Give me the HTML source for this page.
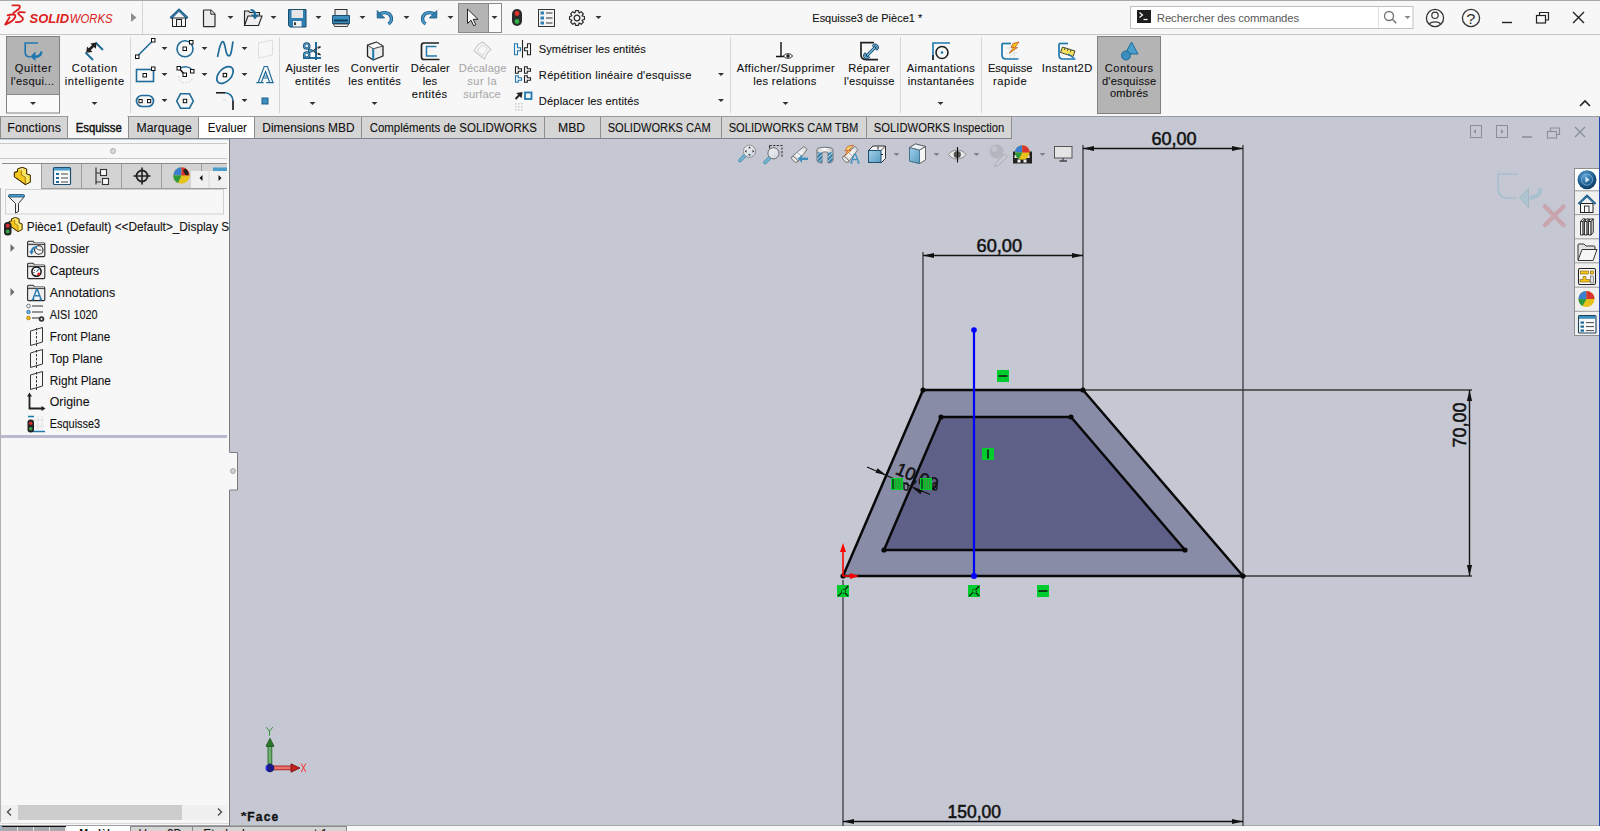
<!DOCTYPE html>
<html><head><meta charset="utf-8"><title>SOLIDWORKS</title>
<style>
*{margin:0;padding:0}
html,body{width:1600px;height:831px;overflow:hidden;background:#f7f7f7;font-family:"Liberation Sans",sans-serif}
svg{position:absolute;left:0;top:0;display:block}
</style></head><body>
<svg width="1600" height="831" viewBox="0 0 1600 831">
<rect x="0" y="0" width="1600" height="831" fill="#f7f7f7"/>
<line x1="0" y1="0.5" x2="1600" y2="0.5" stroke="#a9a9a9" stroke-width="1"/>
<line x1="0" y1="34.5" x2="1600" y2="34.5" stroke="#c6c6c6" stroke-width="1"/>
<line x1="142.5" y1="1" x2="142.5" y2="34" stroke="#d6d6d6" stroke-width="1"/>
<rect x="230" y="117" width="1370" height="709" fill="#c5c8d3"/>
<line x1="0" y1="116.5" x2="1600" y2="116.5" stroke="#9a9a9a" stroke-width="1"/>
<rect x="0" y="826" width="1600" height="5" fill="#f5f5f5"/>
<line x1="230" y1="825.5" x2="1600" y2="825.5" stroke="#a8a8a8" stroke-width="1"/>
<text x="812.32" y="22" font-family="Liberation Sans" font-size="11.3" font-weight="normal" fill="#111" textLength="109.86" lengthAdjust="spacingAndGlyphs" stroke="#111" stroke-width="0.1">Esquisse3 de Pièce1 *</text>
<rect x="0" y="117" width="68" height="21" fill="#d5d5d5"/>
<rect x="68" y="117" width="60" height="21" fill="#f7f7f7"/>
<rect x="128" y="117" width="70" height="21" fill="#d5d5d5"/>
<rect x="198" y="117" width="56" height="21" fill="#ffffff"/>
<rect x="254" y="117" width="107" height="21" fill="#d5d5d5"/>
<rect x="361" y="117" width="183" height="21" fill="#d5d5d5"/>
<rect x="544" y="117" width="56" height="21" fill="#d5d5d5"/>
<rect x="600" y="117" width="121" height="21" fill="#d5d5d5"/>
<rect x="721" y="117" width="145" height="21" fill="#d5d5d5"/>
<rect x="866" y="117" width="146" height="21" fill="#d5d5d5"/>
<line x1="0.5" y1="117" x2="0.5" y2="138" stroke="#8e8e8e" stroke-width="1"/>
<text x="7.35" y="132" font-family="Liberation Sans" font-size="12.5" font-weight="normal" fill="#111" textLength="53.50" lengthAdjust="spacingAndGlyphs" stroke="#111" stroke-width="0.1">Fonctions</text>
<line x1="67.5" y1="117" x2="67.5" y2="138" stroke="#8e8e8e" stroke-width="1"/>
<text x="75.65" y="132" font-family="Liberation Sans" font-size="12.5" font-weight="normal" fill="#111" textLength="46.10" lengthAdjust="spacingAndGlyphs" stroke="#111" stroke-width="0.45">Esquisse</text>
<line x1="128.5" y1="117" x2="128.5" y2="138" stroke="#8e8e8e" stroke-width="1"/>
<text x="136.55" y="132" font-family="Liberation Sans" font-size="12.5" font-weight="normal" fill="#111" textLength="55.20" lengthAdjust="spacingAndGlyphs" stroke="#111" stroke-width="0.1">Marquage</text>
<line x1="198.5" y1="117" x2="198.5" y2="138" stroke="#8e8e8e" stroke-width="1"/>
<text x="207.75" y="132" font-family="Liberation Sans" font-size="12.5" font-weight="normal" fill="#111" textLength="39.20" lengthAdjust="spacingAndGlyphs" stroke="#111" stroke-width="0.1">Evaluer</text>
<line x1="254.5" y1="117" x2="254.5" y2="138" stroke="#8e8e8e" stroke-width="1"/>
<text x="262.25" y="132" font-family="Liberation Sans" font-size="12.5" font-weight="normal" fill="#111" textLength="92.30" lengthAdjust="spacingAndGlyphs" stroke="#111" stroke-width="0.1">Dimensions MBD</text>
<line x1="361.5" y1="117" x2="361.5" y2="138" stroke="#8e8e8e" stroke-width="1"/>
<text x="369.65" y="132" font-family="Liberation Sans" font-size="12.5" font-weight="normal" fill="#111" textLength="167.30" lengthAdjust="spacingAndGlyphs" stroke="#111" stroke-width="0.1">Compléments de SOLIDWORKS</text>
<line x1="544.5" y1="117" x2="544.5" y2="138" stroke="#8e8e8e" stroke-width="1"/>
<text x="558.05" y="132" font-family="Liberation Sans" font-size="12.5" font-weight="normal" fill="#111" textLength="27.10" lengthAdjust="spacingAndGlyphs" stroke="#111" stroke-width="0.1">MBD</text>
<line x1="600.5" y1="117" x2="600.5" y2="138" stroke="#8e8e8e" stroke-width="1"/>
<text x="607.65" y="132" font-family="Liberation Sans" font-size="12.5" font-weight="normal" fill="#111" textLength="103.10" lengthAdjust="spacingAndGlyphs" stroke="#111" stroke-width="0.1">SOLIDWORKS CAM</text>
<line x1="721.5" y1="117" x2="721.5" y2="138" stroke="#8e8e8e" stroke-width="1"/>
<text x="728.65" y="132" font-family="Liberation Sans" font-size="12.5" font-weight="normal" fill="#111" textLength="129.70" lengthAdjust="spacingAndGlyphs" stroke="#111" stroke-width="0.1">SOLIDWORKS CAM TBM</text>
<line x1="866.5" y1="117" x2="866.5" y2="138" stroke="#8e8e8e" stroke-width="1"/>
<text x="873.85" y="132" font-family="Liberation Sans" font-size="12.5" font-weight="normal" fill="#111" textLength="130.50" lengthAdjust="spacingAndGlyphs" stroke="#111" stroke-width="0.1">SOLIDWORKS Inspection</text>
<line x1="1011.5" y1="117" x2="1011.5" y2="138" stroke="#8e8e8e" stroke-width="1"/>
<rect x="68.5" y="115.8" width="59" height="1.6" fill="#f7f7f7"/>
<line x1="0" y1="138.5" x2="1012" y2="138.5" stroke="#80858a" stroke-width="1"/>
<rect x="6.5" y="36.5" width="53" height="76.5" fill="#fbfbfb" stroke="#808080" stroke-width="1"/>
<rect x="7" y="37" width="52" height="57" fill="#b4b4b4"/>
<line x1="7" y1="94.5" x2="59" y2="94.5" stroke="#8a8a8a" stroke-width="1"/>
<text x="14.73" y="72" font-family="Liberation Sans" font-size="11.1" font-weight="normal" fill="#111" textLength="36.93" lengthAdjust="spacing" stroke="#111" stroke-width="0.1">Quitter</text>
<text x="10.83" y="84.6" font-family="Liberation Sans" font-size="11.1" font-weight="normal" fill="#111" textLength="43.33" lengthAdjust="spacing" stroke="#111" stroke-width="0.1">l'esqui...</text>
<path d="M30 102.0h6l-3 3z" fill="#333"/>
<text x="71.83" y="72" font-family="Liberation Sans" font-size="11.1" font-weight="normal" fill="#111" textLength="45.33" lengthAdjust="spacing" stroke="#111" stroke-width="0.1">Cotation</text>
<text x="64.83" y="84.6" font-family="Liberation Sans" font-size="11.1" font-weight="normal" fill="#111" textLength="59.33" lengthAdjust="spacing" stroke="#111" stroke-width="0.1">intelligente</text>
<path d="M91.5 102.0h6l-3 3z" fill="#333"/>
<line x1="130.5" y1="37" x2="130.5" y2="113" stroke="#d6d6d6" stroke-width="1"/>
<line x1="279.5" y1="37" x2="279.5" y2="113" stroke="#d6d6d6" stroke-width="1"/>
<line x1="730.5" y1="37" x2="730.5" y2="113" stroke="#d6d6d6" stroke-width="1"/>
<line x1="900.5" y1="37" x2="900.5" y2="113" stroke="#d6d6d6" stroke-width="1"/>
<line x1="981.5" y1="37" x2="981.5" y2="113" stroke="#d6d6d6" stroke-width="1"/>
<path d="M161.5 47.0h6l-3 3z" fill="#333"/>
<path d="M161.5 73.0h6l-3 3z" fill="#333"/>
<path d="M201.5 47.0h6l-3 3z" fill="#333"/>
<path d="M201.5 73.0h6l-3 3z" fill="#333"/>
<path d="M241.5 47.0h6l-3 3z" fill="#333"/>
<path d="M241.5 73.0h6l-3 3z" fill="#333"/>
<path d="M161.5 99.0h6l-3 3z" fill="#333"/>
<path d="M241.5 99.0h6l-3 3z" fill="#333"/>
<text x="285.53" y="72" font-family="Liberation Sans" font-size="11.1" font-weight="normal" fill="#111" textLength="53.83" lengthAdjust="spacing" stroke="#111" stroke-width="0.1">Ajuster les</text>
<text x="295.03" y="84.7" font-family="Liberation Sans" font-size="11.1" font-weight="normal" fill="#111" textLength="35.33" lengthAdjust="spacing" stroke="#111" stroke-width="0.1">entités</text>
<path d="M309.5 102.0h6l-3 3z" fill="#333"/>
<text x="350.83" y="72" font-family="Liberation Sans" font-size="11.1" font-weight="normal" fill="#111" textLength="47.83" lengthAdjust="spacing" stroke="#111" stroke-width="0.1">Convertir</text>
<text x="348.33" y="84.7" font-family="Liberation Sans" font-size="11.1" font-weight="normal" fill="#111" textLength="52.53" lengthAdjust="spacing" stroke="#111" stroke-width="0.1">les entités</text>
<path d="M371.5 102.0h6l-3 3z" fill="#333"/>
<text x="410.83" y="72" font-family="Liberation Sans" font-size="11.1" font-weight="normal" fill="#111" textLength="38.83" lengthAdjust="spacing" stroke="#111" stroke-width="0.1">Décaler</text>
<text x="422.83" y="84.7" font-family="Liberation Sans" font-size="11.1" font-weight="normal" fill="#111" textLength="14.33" lengthAdjust="spacing" stroke="#111" stroke-width="0.1">les</text>
<text x="411.83" y="97.5" font-family="Liberation Sans" font-size="11.1" font-weight="normal" fill="#111" textLength="35.33" lengthAdjust="spacing" stroke="#111" stroke-width="0.1">entités</text>
<text x="458.83" y="72" font-family="Liberation Sans" font-size="11.1" font-weight="normal" fill="#aaaaaa" textLength="47.53" lengthAdjust="spacing" stroke="#aaaaaa" stroke-width="0.1">Décalage</text>
<text x="467.33" y="84.7" font-family="Liberation Sans" font-size="11.1" font-weight="normal" fill="#aaaaaa" textLength="29.33" lengthAdjust="spacing" stroke="#aaaaaa" stroke-width="0.1">sur la</text>
<text x="463.33" y="97.5" font-family="Liberation Sans" font-size="11.1" font-weight="normal" fill="#aaaaaa" textLength="37.33" lengthAdjust="spacing" stroke="#aaaaaa" stroke-width="0.1">surface</text>
<text x="538.83" y="52.5" font-family="Liberation Sans" font-size="11.1" font-weight="normal" fill="#111" textLength="107.03" lengthAdjust="spacing" stroke="#111" stroke-width="0.1">Symétriser les entités</text>
<text x="538.83" y="78.7" font-family="Liberation Sans" font-size="11.1" font-weight="normal" fill="#111" textLength="152.53" lengthAdjust="spacing" stroke="#111" stroke-width="0.1">Répétition linéaire d'esquisse</text>
<text x="538.83" y="104.7" font-family="Liberation Sans" font-size="11.1" font-weight="normal" fill="#111" textLength="100.33" lengthAdjust="spacing" stroke="#111" stroke-width="0.1">Déplacer les entités</text>
<path d="M718 73.0h6l-3 3z" fill="#333"/>
<path d="M718 99.0h6l-3 3z" fill="#333"/>
<text x="736.73" y="71.7" font-family="Liberation Sans" font-size="11.1" font-weight="normal" fill="#111" textLength="97.93" lengthAdjust="spacing" stroke="#111" stroke-width="0.1">Afficher/Supprimer</text>
<text x="753.33" y="84.5" font-family="Liberation Sans" font-size="11.1" font-weight="normal" fill="#111" textLength="63.03" lengthAdjust="spacing" stroke="#111" stroke-width="0.1">les relations</text>
<path d="M782.5 102.0h6l-3 3z" fill="#333"/>
<text x="848.33" y="71.7" font-family="Liberation Sans" font-size="11.1" font-weight="normal" fill="#111" textLength="41.33" lengthAdjust="spacing" stroke="#111" stroke-width="0.1">Réparer</text>
<text x="844.03" y="84.5" font-family="Liberation Sans" font-size="11.1" font-weight="normal" fill="#111" textLength="50.33" lengthAdjust="spacing" stroke="#111" stroke-width="0.1">l'esquisse</text>
<text x="906.83" y="71.7" font-family="Liberation Sans" font-size="11.1" font-weight="normal" fill="#111" textLength="68.03" lengthAdjust="spacing" stroke="#111" stroke-width="0.1">Aimantations</text>
<text x="907.83" y="84.5" font-family="Liberation Sans" font-size="11.1" font-weight="normal" fill="#111" textLength="66.33" lengthAdjust="spacing" stroke="#111" stroke-width="0.1">instantanées</text>
<path d="M937.5 102.0h6l-3 3z" fill="#333"/>
<text x="987.93" y="72" font-family="Liberation Sans" font-size="11.1" font-weight="normal" fill="#111" textLength="44.53" lengthAdjust="spacing" stroke="#111" stroke-width="0.1">Esquisse</text>
<text x="992.93" y="84.9" font-family="Liberation Sans" font-size="11.1" font-weight="normal" fill="#111" textLength="33.63" lengthAdjust="spacing" stroke="#111" stroke-width="0.1">rapide</text>
<text x="1041.73" y="72" font-family="Liberation Sans" font-size="11.1" font-weight="normal" fill="#111" textLength="50.43" lengthAdjust="spacing" stroke="#111" stroke-width="0.1">Instant2D</text>
<rect x="1097.5" y="36.5" width="63" height="77" fill="#b4b4b4" stroke="#808080" stroke-width="1"/>
<text x="1104.83" y="72" font-family="Liberation Sans" font-size="11.1" font-weight="normal" fill="#111" textLength="48.33" lengthAdjust="spacing" stroke="#111" stroke-width="0.1">Contours</text>
<text x="1101.93" y="84.9" font-family="Liberation Sans" font-size="11.1" font-weight="normal" fill="#111" textLength="54.23" lengthAdjust="spacing" stroke="#111" stroke-width="0.1">d'esquisse</text>
<text x="1109.93" y="97.3" font-family="Liberation Sans" font-size="11.1" font-weight="normal" fill="#111" textLength="38.23" lengthAdjust="spacing" stroke="#111" stroke-width="0.1">ombrés</text>
<path d="M1580 106l5-5 5 5" fill="none" stroke="#222" stroke-width="1.6"/>
<rect x="0" y="139" width="229" height="687" fill="#f7f7f7"/>
<line x1="0" y1="139.5" x2="229" y2="139.5" stroke="#b9cdd3" stroke-width="1"/>
<line x1="229.5" y1="139" x2="229.5" y2="452" stroke="#7d7d7d" stroke-width="1"/>
<line x1="229.5" y1="490" x2="229.5" y2="826" stroke="#7d7d7d" stroke-width="1"/>
<path d="M229.5 452.5h8v37.5h-8" fill="#f7f7f7" stroke="#7d7d7d"/>
<circle cx="233" cy="471" r="2.5" fill="#d0d0d0" stroke="#9a9a9a" stroke-width="0.8"/>
<line x1="0" y1="143.5" x2="227" y2="143.5" stroke="#c9c9c9" stroke-width="1"/>
<line x1="0" y1="158.5" x2="227" y2="158.5" stroke="#c9c9c9" stroke-width="1"/>
<circle cx="113" cy="151" r="2.5" fill="#dcdcdc" stroke="#a0a0a0" stroke-width="0.8"/>
<rect x="41" y="163" width="186" height="25" fill="#d3d3d3"/>
<line x1="2" y1="163.5" x2="227" y2="163.5" stroke="#8c8c8c" stroke-width="1"/>
<line x1="41.5" y1="164" x2="41.5" y2="188" stroke="#9e9e9e" stroke-width="1"/>
<line x1="81.5" y1="164" x2="81.5" y2="188" stroke="#9e9e9e" stroke-width="1"/>
<line x1="121.5" y1="164" x2="121.5" y2="188" stroke="#9e9e9e" stroke-width="1"/>
<line x1="161.5" y1="164" x2="161.5" y2="188" stroke="#9e9e9e" stroke-width="1"/>
<line x1="201.5" y1="164" x2="201.5" y2="188" stroke="#9e9e9e" stroke-width="1"/>
<line x1="41" y1="188.5" x2="227" y2="188.5" stroke="#9e9e9e" stroke-width="1"/>
<rect x="2" y="164" width="39" height="25" fill="#f7f7f7"/>
<rect x="191" y="171" width="18" height="17" fill="#f0f0f0"/>
<rect x="209" y="171" width="18" height="17" fill="#f0f0f0"/>
<line x1="208.5" y1="171" x2="208.5" y2="188" stroke="#d0d0d0" stroke-width="1"/>
<path d="M203 174.5v6l-3-3z" fill="#111"/><path d="M218 174.5v6l3-3z" fill="#111"/>
<rect x="5.5" y="189.5" width="218" height="24.5" fill="#f7f7f7" stroke="#d0d0d0" stroke-width="1"/>
<text x="26.77" y="230.9" font-family="Liberation Sans" font-size="12.1" font-weight="normal" fill="#111" textLength="202.45" lengthAdjust="spacingAndGlyphs" stroke="#111" stroke-width="0.1">Pièce1 (Default) &lt;&lt;Default&gt;_Display S</text>
<text x="49.77" y="252.8" font-family="Liberation Sans" font-size="12.1" font-weight="normal" fill="#111" textLength="39.45" lengthAdjust="spacingAndGlyphs" stroke="#111" stroke-width="0.1">Dossier</text>
<text x="49.77" y="274.75" font-family="Liberation Sans" font-size="12.1" font-weight="normal" fill="#111" textLength="49.45" lengthAdjust="spacingAndGlyphs" stroke="#111" stroke-width="0.1">Capteurs</text>
<text x="49.77" y="296.7" font-family="Liberation Sans" font-size="12.1" font-weight="normal" fill="#111" textLength="65.45" lengthAdjust="spacingAndGlyphs" stroke="#111" stroke-width="0.1">Annotations</text>
<text x="49.77" y="318.65" font-family="Liberation Sans" font-size="12.1" font-weight="normal" fill="#111" textLength="47.85" lengthAdjust="spacingAndGlyphs" stroke="#111" stroke-width="0.1">AISI 1020</text>
<text x="49.77" y="340.6" font-family="Liberation Sans" font-size="12.1" font-weight="normal" fill="#111" textLength="60.45" lengthAdjust="spacingAndGlyphs" stroke="#111" stroke-width="0.1">Front Plane</text>
<text x="49.77" y="362.55" font-family="Liberation Sans" font-size="12.1" font-weight="normal" fill="#111" textLength="52.85" lengthAdjust="spacingAndGlyphs" stroke="#111" stroke-width="0.1">Top Plane</text>
<text x="49.77" y="384.5" font-family="Liberation Sans" font-size="12.1" font-weight="normal" fill="#111" textLength="61.15" lengthAdjust="spacingAndGlyphs" stroke="#111" stroke-width="0.1">Right Plane</text>
<text x="49.77" y="406.45000000000005" font-family="Liberation Sans" font-size="12.1" font-weight="normal" fill="#111" textLength="39.75" lengthAdjust="spacingAndGlyphs" stroke="#111" stroke-width="0.1">Origine</text>
<text x="49.77" y="428.4" font-family="Liberation Sans" font-size="12.1" font-weight="normal" fill="#111" textLength="50.45" lengthAdjust="spacingAndGlyphs" stroke="#111" stroke-width="0.1">Esquisse3</text>
<path d="M10.5 244l4 4-4 4z" fill="#6d6d6d"/>
<path d="M10.5 288l4 4-4 4z" fill="#6d6d6d"/>
<rect x="0" y="435" width="227" height="3" fill="#b9b9d0"/>
<rect x="0" y="805" width="227" height="15" fill="#f0f0f0"/>
<rect x="18" y="805" width="164" height="15" fill="#cdcdcd"/>
<path d="M11 808.5l-3.5 3.5 3.5 3.5M218 808.5l3.5 3.5-3.5 3.5" fill="none" stroke="#555" stroke-width="1.5"/>
<line x1="0" y1="825.5" x2="229" y2="825.5" stroke="#a0a0a0" stroke-width="1"/>
<rect x="0" y="826" width="1600" height="5" fill="#f8f8f8"/>
<line x1="0" y1="823.5" x2="229" y2="823.5" stroke="#dadada" stroke-width="1"/>
<rect x="0" y="826" width="2" height="5" fill="#9fb3c4"/>
<rect x="2" y="826" width="64" height="5" fill="#a7a9ae"/>
<line x1="2" y1="826.5" x2="66" y2="826.5" stroke="#111" stroke-width="1.2"/>
<line x1="17.5" y1="827" x2="17.5" y2="831" stroke="#e8e8e8" stroke-width="1"/>
<line x1="33.5" y1="827" x2="33.5" y2="831" stroke="#e8e8e8" stroke-width="1"/>
<line x1="49.5" y1="827" x2="49.5" y2="831" stroke="#e8e8e8" stroke-width="1"/>
<line x1="65.5" y1="827" x2="65.5" y2="831" stroke="#e8e8e8" stroke-width="1"/>
<rect x="67" y="826" width="63" height="5" fill="#ffffff"/>
<rect x="131" y="826" width="61" height="5" fill="#d5d5d5"/>
<rect x="193" y="826" width="153" height="5" fill="#d5d5d5"/>
<line x1="130.5" y1="826" x2="130.5" y2="831" stroke="#8a8a8a" stroke-width="1"/>
<line x1="192.5" y1="826" x2="192.5" y2="831" stroke="#8a8a8a" stroke-width="1"/>
<line x1="346.5" y1="826" x2="346.5" y2="831" stroke="#8a8a8a" stroke-width="1"/>
<line x1="130" y1="826.5" x2="347" y2="826.5" stroke="#8a8a8a" stroke-width="1"/>
<text x="79.28" y="837.5" font-family="Liberation Sans" font-size="12" font-weight="bold" fill="#111" textLength="36.44" lengthAdjust="spacingAndGlyphs">Modèle</text>
<text x="138.88" y="837.5" font-family="Liberation Sans" font-size="12" font-weight="normal" fill="#111" textLength="42.84" lengthAdjust="spacingAndGlyphs" stroke="#111" stroke-width="0.1">Vues 3D</text>
<text x="203.28" y="837.5" font-family="Liberation Sans" font-size="12" font-weight="normal" fill="#111" textLength="124.04" lengthAdjust="spacingAndGlyphs" stroke="#111" stroke-width="0.1">Etude de mouvement 1</text>
<line x1="0.5" y1="188" x2="0.5" y2="822" stroke="#b0b0b0" stroke-width="1"/>
<text x="240.40" y="819.5" font-family="Liberation Sans" font-size="10" font-weight="bold" fill="#111" textLength="6.40" lengthAdjust="spacingAndGlyphs">*</text>
<text x="247.28" y="821.2" font-family="Liberation Sans" font-size="12" font-weight="bold" fill="#111" textLength="30.94" lengthAdjust="spacing" stroke="#111" stroke-width="0.35">Face</text>
<polygon points="923,390 1083,390 1243,576 843,576" fill="#888ca7"/>
<polygon points="941,417 1071,417 1185,550 884,550" fill="#5f6087"/>
<line x1="1083" y1="145" x2="1083" y2="388" stroke="#3a3a3a" stroke-width="1.3"/>
<line x1="1243" y1="145" x2="1243" y2="826" stroke="#3a3a3a" stroke-width="1.3"/>
<line x1="923" y1="252" x2="923" y2="388" stroke="#3a3a3a" stroke-width="1.3"/>
<line x1="1085" y1="390" x2="1472" y2="390" stroke="#3a3a3a" stroke-width="1.3"/>
<line x1="1245" y1="576" x2="1472" y2="576" stroke="#3a3a3a" stroke-width="1.3"/>
<line x1="843" y1="580" x2="843" y2="826" stroke="#3a3a3a" stroke-width="1.3"/>
<line x1="1083" y1="148.5" x2="1243" y2="148.5" stroke="#111" stroke-width="1.4"/>
<path d="M1083 148.5l11 -2.6v5.2z M1243 148.5l-11 -2.6v5.2z" fill="#111"/>
<line x1="923" y1="255.5" x2="1083" y2="255.5" stroke="#111" stroke-width="1.4"/>
<path d="M923 255.5l11 -2.6v5.2z M1083 255.5l-11 -2.6v5.2z" fill="#111"/>
<line x1="1469.5" y1="390" x2="1469.5" y2="576" stroke="#111" stroke-width="1.4"/>
<path d="M1469.5 390l-2.6 11h5.2z M1469.5 576l-2.6 -11h5.2z" fill="#111"/>
<line x1="843" y1="821.5" x2="1243" y2="821.5" stroke="#111" stroke-width="1.4"/>
<path d="M843 821.5l11 -2.6v5.2z M1243 821.5l-11 -2.6v5.2z" fill="#111"/>
<text x="1151.39" y="145" font-family="Liberation Sans" font-size="18.5" font-weight="normal" fill="#111" textLength="45.22" lengthAdjust="spacingAndGlyphs" stroke="#111" stroke-width="0.55">60,00</text>
<text x="976.59" y="252.3" font-family="Liberation Sans" font-size="18.5" font-weight="normal" fill="#111" textLength="45.52" lengthAdjust="spacingAndGlyphs" stroke="#111" stroke-width="0.55">60,00</text>
<text x="947.62" y="818" font-family="Liberation Sans" font-size="18" font-weight="normal" fill="#111" textLength="53.46" lengthAdjust="spacingAndGlyphs" stroke="#111" stroke-width="0.55">150,00</text>
<g transform="translate(1466 447) rotate(-90)">
<text x="-0.62" y="0" font-family="Liberation Sans" font-size="18.6" font-weight="normal" fill="#111" textLength="45.03" lengthAdjust="spacingAndGlyphs" stroke="#111" stroke-width="0.55">70,00</text>
</g>
<polygon points="923,390 1083,390 1243,576 843,576" fill="none" stroke="#080808" stroke-width="2.5" stroke-linejoin="round"/>
<polygon points="941,417 1071,417 1185,550 884,550" fill="none" stroke="#080808" stroke-width="2.5" stroke-linejoin="round"/>
<circle cx="923" cy="390" r="2.6" fill="#080808"/>
<circle cx="1083" cy="390" r="2.6" fill="#080808"/>
<circle cx="1243" cy="576" r="2.6" fill="#080808"/>
<circle cx="843" cy="576" r="2.6" fill="#080808"/>
<circle cx="941" cy="417" r="2.6" fill="#080808"/>
<circle cx="1071" cy="417" r="2.6" fill="#080808"/>
<circle cx="1185" cy="550" r="2.6" fill="#080808"/>
<circle cx="884" cy="550" r="2.6" fill="#080808"/>
<line x1="974" y1="330" x2="974" y2="576" stroke="#0000ff" stroke-width="2.2"/>
<circle cx="974" cy="330" r="2.8" fill="#0000ff"/><circle cx="974" cy="576" r="3" fill="#0000ff"/>
<path d="M843 576V551" stroke="#ff0000" stroke-width="1.6"/><path d="M843 543l-3 9h6z" fill="#ff0000"/>
<path d="M843 576H851" stroke="#ff0000" stroke-width="1.6"/><path d="M859 576l-9 -3v6z" fill="#ff0000"/>
<path d="M867 467L930 494.5" stroke="#111" stroke-width="1.2"/>
<path d="M886 475l-10.5 -2.2 2 -4.6z M912 487.5l10.5 2.2 -2 4.6z" fill="#111"/>
<g transform="translate(895.5 474) rotate(23.27)">
<text x="-1.08" y="0" font-family="Liberation Sans" font-size="18" font-weight="normal" fill="#111" textLength="44.16" lengthAdjust="spacingAndGlyphs" stroke="#111" stroke-width="0.55">10,00</text>
</g>
<rect x="997" y="370" width="12" height="12" fill="#00cc2e"/>
<line x1="998.5" y1="376" x2="1007.5" y2="376" stroke="#111" stroke-width="1.5"/>
<rect x="982" y="448" width="12" height="12" fill="#00cc2e"/>
<line x1="988" y1="449.5" x2="988" y2="458.5" stroke="#111" stroke-width="1.5"/>
<rect x="837" y="585" width="12" height="12" fill="#00cc2e"/>
<path d="M838.2 596.2L841.8 592.6M844.8 589.6L848.2 586M845 593L848.2 596.2" stroke="#111" stroke-width="1.2" fill="none"/>
<circle cx="843.4" cy="591.3" r="2" fill="#00cc2e" stroke="#111" stroke-width="1" stroke-dasharray="1.2 0.9"/>
<rect x="968" y="585" width="12" height="12" fill="#00cc2e"/>
<path d="M969.2 596.2L972.8 592.6M975.8 589.6L979.2 586M976 593L979.2 596.2" stroke="#111" stroke-width="1.2" fill="none"/>
<circle cx="974.4" cy="591.3" r="2" fill="#00cc2e" stroke="#111" stroke-width="1" stroke-dasharray="1.2 0.9"/>
<rect x="1037" y="585" width="12" height="12" fill="#00cc2e"/>
<line x1="1038.5" y1="591" x2="1047.5" y2="591" stroke="#111" stroke-width="1.5"/>
<rect x="891" y="478" width="12" height="12" fill="#00cc2e"/>
<line x1="893" y1="479" x2="893" y2="489" stroke="#111" stroke-width="1.2"/>
<line x1="895.5" y1="479" x2="895.5" y2="489" stroke="#3c8c3c" stroke-width="1.2"/>
<line x1="898" y1="479" x2="898" y2="489" stroke="#3c8c3c" stroke-width="1.2"/>
<line x1="900.5" y1="479" x2="900.5" y2="489" stroke="#3c8c3c" stroke-width="1.2"/>
<rect x="920" y="478" width="12" height="12" fill="#00cc2e"/>
<line x1="922" y1="479" x2="922" y2="489" stroke="#111" stroke-width="1.2"/>
<line x1="924.5" y1="479" x2="924.5" y2="489" stroke="#3c8c3c" stroke-width="1.2"/>
<line x1="927" y1="479" x2="927" y2="489" stroke="#3c8c3c" stroke-width="1.2"/>
<line x1="929.5" y1="479" x2="929.5" y2="489" stroke="#3c8c3c" stroke-width="1.2"/>
<rect x="904" y="483" width="4" height="7" rx="1.5" fill="none" stroke="#111" stroke-width="1.3"/>
<rect x="933" y="483" width="4" height="7" rx="1.5" fill="none" stroke="#111" stroke-width="1.3"/>
<rect x="1130.5" y="6.5" width="282.5" height="22" fill="#ffffff" stroke="#c0c0c0" stroke-width="1"/>
<line x1="1378.5" y1="7" x2="1378.5" y2="28" stroke="#e2e2e2" stroke-width="1"/>
<rect x="1137" y="10" width="14" height="13" fill="#1e1e1e"/>
<path d="M1139.5 12.5l3 2.5-3 2.5" stroke="#fff" stroke-width="1.2" fill="none"/><path d="M1143.5 19.5h4" stroke="#fff" stroke-width="1.2"/>
<text x="1156.82" y="22.3" font-family="Liberation Sans" font-size="11.4" font-weight="normal" fill="#5a5a5a" textLength="142.37" lengthAdjust="spacing" stroke-width="0">Rechercher des commandes</text>
<circle cx="1389" cy="16" r="4.5" fill="none" stroke="#777" stroke-width="1.4"/><path d="M1392.3 19.3l4 4" stroke="#777" stroke-width="1.6"/>
<path d="M1404.5 16.0h6l-3 3z" fill="#888"/>
<g fill="none" stroke="#dc2020" stroke-linecap="round" stroke-linejoin="round"><path d="M12.4 5.4h6.2c1.7 0 1.6 2.2 0.2 3.6l-5.4 3.9" stroke-width="1.9"/><path d="M7.6 15.3c4.2-1.3 8.6-1.3 7.6 1.6c-1.4 3.6-6 6.2-10 7.6l4.4-7.2" stroke-width="1.9"/><path d="M24.8 12.4c-2.8-0.5-7.4-0.6-6.4 1.5c0.9 1.9 4.8 2.8 4.6 5.1c-0.2 2.4-4.4 3.2-7.2 3.1" stroke-width="1.9"/></g>
<text x="29.55" y="22.9" font-family="Liberation Sans" font-size="12.5" font-weight="bold" fill="#dc2020" textLength="39.50" lengthAdjust="spacingAndGlyphs" font-style="italic">SOLID</text>
<text x="69.85" y="22.9" font-family="Liberation Sans" font-size="12.5" font-weight="normal" fill="#dc2020" textLength="42.70" lengthAdjust="spacingAndGlyphs" font-style="italic" stroke-width="0">WORKS</text>
<path d="M131 13v9l5.5-4.5z" fill="#8e8e8e"/>
<g><rect x="172.5" y="18" width="13" height="8.5" fill="#f7f7f7" stroke="#222" stroke-width="1"/><rect x="176.5" y="19.5" width="5" height="7" fill="#eee" stroke="#222" stroke-width="1"/><path d="M170.5 18.2L179 10l8.5 8.2" fill="none" stroke="#1d5a84" stroke-width="2.6"/><path d="M171.5 17.6L179 10.6l7.5 7" fill="none" stroke="#4f9ac8" stroke-width="0.8"/></g>
<path d="M203.5 10h7.5l4 4v12c0 0.5-0.3 0.6-0.6 0.6h-10.3c-0.4 0-0.6-0.2-0.6-0.6v-15.4c0-0.4 0.2-0.6 0.6-0.6z" fill="#ececec" stroke="#2a2a2a" stroke-width="1.2"/><path d="M210.8 10v4.2h4.2" fill="#ddd" stroke="#2a2a2a" stroke-width="1"/>
<path d="M227.5 16.0h6l-3 3z" fill="#333"/>
<path d="M244.5 25.5v-14.5h4l1.5 1.5h9.5v3" fill="#e2e2e2" stroke="#222" stroke-width="1.1"/><path d="M244.5 25.5l3.5-9.5h14l-3.5 9.5z" fill="#f0f0f0" stroke="#222" stroke-width="1.1"/><path d="M250.5 10c3 0 4.5 2 4.5 5" fill="none" stroke="#1f6b99" stroke-width="2.2"/><path d="M251 14.5h8l-4 5z" fill="#1f6b99"/>
<path d="M270.5 16.0h6l-3 3z" fill="#333"/>
<path d="M288.5 9.5h17.5v17.5h-16l-1.5-1.5z" fill="#2f7fb0" stroke="#1b4d6e" stroke-width="1"/><rect x="291.5" y="10" width="11.5" height="8" fill="#e6e6e6"/><rect x="293" y="21" width="8.5" height="5.5" fill="#f2f2f2"/><rect x="294.2" y="22.3" width="1.6" height="2.8" fill="#111"/>
<path d="M315.5 16.0h6l-3 3z" fill="#333"/>
<rect x="335" y="9.5" width="12" height="6" fill="#ececec" stroke="#333" stroke-width="1"/><path d="M332.5 15.5h17v8h-17z" fill="#3b8dbd" stroke="#1b4d6e" stroke-width="1"/><rect x="334" y="19.5" width="14" height="2" fill="#0f3f5f"/><path d="M333.5 24h15l-1 2.5h-13z" fill="#eee" stroke="#333" stroke-width="0.9"/>
<path d="M359.5 16.0h6l-3 3z" fill="#333"/>
<path d="M378 15.5c4-4 11-4 13 1c1.2 3-0.5 6-2.5 7.5" fill="none" stroke="#1d5a84" stroke-width="3.4"/><path d="M378 15.5c4-4 11-4 13 1c1.2 3-0.5 6-2.5 7.5" fill="none" stroke="#4c9ccd" stroke-width="1.6"/><path d="M377.2 10.5v7.5h7.5z" fill="#2f7fb0" stroke="#1d5a84" stroke-width="0.8"/>
<path d="M403.5 16.0h6l-3 3z" fill="#333"/>
<path d="M436 15.5c-4-4-11-4-13 1c-1.2 3 0.5 6 2.5 7.5" fill="none" stroke="#1d5a84" stroke-width="3.4"/><path d="M436 15.5c-4-4-11-4-13 1c-1.2 3 0.5 6 2.5 7.5" fill="none" stroke="#4c9ccd" stroke-width="1.6"/><path d="M436.8 10.5v7.5h-7.5z" fill="#2f7fb0" stroke="#1d5a84" stroke-width="0.8"/>
<path d="M447.5 16.0h6l-3 3z" fill="#333"/>
<rect x="458.5" y="3.5" width="43" height="29" fill="#fafafa" stroke="#8a8a8a"/><rect x="459" y="4" width="29.5" height="28" fill="#b4b4b4"/><line x1="488.5" y1="4" x2="488.5" y2="32" stroke="#8a8a8a"/><path d="M467.5 9v14.5l3.5-3.3 2.6 5.5 2.2-1-2.6-5.4h4.8z" fill="#fafafa" stroke="#222" stroke-width="1"/>
<path d="M491.5 16.0h6l-3 3z" fill="#333"/>
<rect x="512" y="9" width="10" height="17" rx="5" fill="#2b2b2b"/><circle cx="517" cy="13.5" r="2.4" fill="#e23030"/><circle cx="517" cy="21.5" r="2.4" fill="#2fb04a"/>
<rect x="538.5" y="9.5" width="16" height="17" fill="#f4f4f4" stroke="#333" stroke-width="1"/><rect x="540.5" y="11.5" width="3.5" height="3" fill="#2f7fb0"/><rect x="540.5" y="16.5" width="3.5" height="3" fill="#2f7fb0"/><rect x="540.5" y="21.5" width="3.5" height="3" fill="#2f7fb0"/><path d="M546 13h6.5M546 18h6.5M546 23h6.5" stroke="#333" stroke-width="1"/>
<g transform="translate(577 18)"><path d="M-1.97 -5.24 L-1.51 -7.45 L1.51 -7.45 L1.97 -5.24 L2.31 -5.10 L4.20 -6.33 L6.33 -4.20 L5.10 -2.31 L5.24 -1.97 L7.45 -1.51 L7.45 1.51 L5.24 1.97 L5.10 2.31 L6.33 4.20 L4.20 6.33 L2.31 5.10 L1.97 5.24 L1.51 7.45 L-1.51 7.45 L-1.97 5.24 L-2.31 5.10 L-4.20 6.33 L-6.33 4.20 L-5.10 2.31 L-5.24 1.97 L-7.45 1.51 L-7.45 -1.51 L-5.24 -1.97 L-5.10 -2.31 L-6.33 -4.20 L-4.20 -6.33 L-2.31 -5.10z" fill="#f4f4f4" stroke="#2a2a2a" stroke-width="1.2" stroke-linejoin="round"/><circle r="2.9" fill="none" stroke="#2a2a2a" stroke-width="1.3"/></g>
<path d="M595.5 16.0h6l-3 3z" fill="#333"/>
<circle cx="1435" cy="18" r="8.6" fill="none" stroke="#333" stroke-width="1.3"/><circle cx="1435" cy="15.3" r="3.2" fill="none" stroke="#333" stroke-width="1.2"/><path d="M1429.5 24.2c1.2-3.2 9.8-3.2 11 0" fill="none" stroke="#333" stroke-width="1.2"/>
<circle cx="1471" cy="18" r="8.6" fill="none" stroke="#333" stroke-width="1.3"/>
<text x="1466.36" y="23.5" font-family="Liberation Sans" font-size="14" font-weight="normal" fill="#333" textLength="9.18" lengthAdjust="spacingAndGlyphs">?</text>
<path d="M1502 22.5h10" stroke="#222" stroke-width="1.4"/>
<rect x="1536.5" y="15.5" width="9" height="7.5" fill="none" stroke="#222" stroke-width="1.2"/><path d="M1539.5 15.5v-3h9v7.5h-3" fill="none" stroke="#222" stroke-width="1.2"/>
<path d="M1573 12l11 11M1584 12l-11 11" stroke="#222" stroke-width="1.4"/>
<path d="M38 43H25.2v9.5c0 2.8 2 4.5 5.5 4.5" fill="none" stroke="#1f78ad" stroke-width="1.7"/><path d="M41.5 51.5c-0.5 3.5-3.5 5.5-7.5 5.3" fill="none" stroke="#1f78ad" stroke-width="2.4"/><path d="M30.5 56.5l5-5.2v10z" fill="#1f78ad"/>
<path d="M95.5 42.5l7.5 7.5M85.5 52.5l7.5 7.5" stroke="#1f6b99" stroke-width="1.9"/><path d="M88.5 50.5L94 45" stroke="#222" stroke-width="2.6"/><path d="M86.2 52.8l0.8-6.2 5.4 5.4z M96.6 42.6l-6.2 0.8 5.4 5.4z" fill="#222"/>
<path d="M137 56.5L153.5 40" stroke="#1f6b99" stroke-width="1.6"/><rect x="135.5" y="55" width="3.5" height="3.5" fill="#fff" stroke="#111" stroke-width="1"/><rect x="151.5" y="38.5" width="3.5" height="3.5" fill="#fff" stroke="#111" stroke-width="1"/>
<circle cx="185" cy="48.8" r="8" fill="none" stroke="#1f6b99" stroke-width="1.6"/><rect x="183" y="47" width="3.5" height="3.5" fill="#fff" stroke="#111" stroke-width="1"/><rect x="189.5" y="40.5" width="3.5" height="3.5" fill="#fff" stroke="#111" stroke-width="1"/>
<path d="M217.5 57c1.2-5 2-12 4.5-15c2.5-2.5 3.2 7 4.5 11c1 3.5 3.5 4 4.5 0c0.8-3 1.2-7 2-11.5" fill="none" stroke="#1f6b99" stroke-width="1.7"/>
<path d="M258.5 43l14-3v15l-14 3z" fill="none" stroke="#d0d0d0" stroke-width="1" stroke-dasharray="1.5 1"/>
<rect x="136.5" y="69.5" width="17" height="12" fill="none" stroke="#1f6b99" stroke-width="1.6"/><rect x="143" y="73.5" width="3.5" height="3.5" fill="#fff" stroke="#111" stroke-width="1"/><rect x="151.5" y="67" width="3.5" height="3.5" fill="#fff" stroke="#111" stroke-width="1"/>
<path d="M179 69.5c4-4 11-3.5 13.5 1.5" fill="none" stroke="#1f6b99" stroke-width="1.5"/><path d="M178.5 76c0.5 5 4 7 7 7s6.5-2 7.5-6" fill="none" stroke="#cfcfcf" stroke-width="1.2" stroke-dasharray="1.5 2"/><path d="M179 68l5 6" stroke="#111" stroke-width="1.4"/><rect x="177" y="66.5" width="3.5" height="3.5" fill="#fff" stroke="#111" stroke-width="1"/><rect x="183" y="73" width="3.5" height="3.5" fill="#fff" stroke="#111" stroke-width="1"/><rect x="190.5" y="69.5" width="3.5" height="3.5" fill="#fff" stroke="#111" stroke-width="1"/>
<ellipse cx="225" cy="75" rx="10" ry="6.2" transform="rotate(-47 225 75)" fill="none" stroke="#1f6b99" stroke-width="1.7"/><rect x="223.2" y="73.4" width="3.4" height="3.4" fill="#fff" stroke="#111" stroke-width="1.1"/>
<path d="M256.3 82.6h7.3M266.2 82.6h7.6M258.3 82.3L264.2 66.5h3.3L272.8 82.3M261.4 82.3L265.6 71.5L269.6 82.3M262.5 78h6.2M263.3 76h4.6" fill="none" stroke="#1f6b99" stroke-width="1.15"/>
<rect x="136.5" y="95.5" width="17" height="11" rx="5.5" fill="none" stroke="#1f6b99" stroke-width="1.7"/><rect x="139" y="99.5" width="3.2" height="3.2" fill="#fff" stroke="#111" stroke-width="1"/><rect x="147.5" y="99.5" width="3.2" height="3.2" fill="#fff" stroke="#111" stroke-width="1"/>
<path d="M180.5 93.8h9l3.8 7.2-3.8 7.2h-9l-3.8-7.2z" fill="none" stroke="#1f6b99" stroke-width="1.6"/><rect x="183.3" y="99.3" width="3.4" height="3.4" fill="#fff" stroke="#111" stroke-width="1"/>
<path d="M216 92.8h9" stroke="#111" stroke-width="1.5"/><path d="M225 92.8c4.5 0 8 3.5 8 8" fill="none" stroke="#1f6b99" stroke-width="1.6"/><path d="M233 100.5v9.5" stroke="#111" stroke-width="1.6"/><path d="M223 98.5l3 3M226 98.5l-3 3" stroke="#ddd" stroke-width="0.8"/>
<rect x="262" y="98" width="6" height="6" fill="#3d8fc0" stroke="#1f5f8a" stroke-width="1"/>
<path d="M316 42v18M303 58h18" stroke="#1f6b99" stroke-width="2"/><path d="M308.5 48.5L314 50.8L308.5 53z" fill="#4a9ccb" stroke="#154d72" stroke-width="0.9"/><circle cx="306.7" cy="46" r="2.6" fill="none" stroke="#154d72" stroke-width="2.4"/><circle cx="306.7" cy="46" r="2.6" fill="none" stroke="#5aaee0" stroke-width="0.9"/><circle cx="306.7" cy="55" r="2.6" fill="none" stroke="#154d72" stroke-width="2.4"/><circle cx="306.7" cy="55" r="2.6" fill="none" stroke="#5aaee0" stroke-width="0.9"/><path d="M314 50l7-3.5M314 51.5l7 3.5" stroke="#333" stroke-width="1.4" stroke-dasharray="1.2 0.8"/><path d="M321 46.3l-3.5 0.5 1.5 2z M321 55.2l-3.5-0.5 1.5-2z" fill="#222"/>
<path d="M367.5 45.2L376.5 42.2L383 46V56L373.2 60L367.5 56.3z" fill="#ededed" stroke="#222" stroke-width="1.3" stroke-linejoin="round"/><path d="M367.5 45.2L376.5 42.2L383 46L373.2 48.8z" fill="#fbfbfb" stroke="#333" stroke-width="0.9" stroke-linejoin="round"/><path d="M373.2 49v11" stroke="#1f78ad" stroke-width="2"/>
<path d="M439 43h-15c-1.5 0-2.5 1-2.5 2.5v11.5c0 1.5 1 2.5 2.5 2.5h15.5" fill="none" stroke="#222" stroke-width="1.7"/><path d="M436.5 46.5h-10v9.5h10.5" fill="none" stroke="#1f78ad" stroke-width="1.5"/>
<path d="M474 51c2-4 5-8 9-9l8 7.5c-3 2-5 5-6.5 9.5z" fill="none" stroke="#cacaca" stroke-width="1.1"/><path d="M477 51c1.5-2.5 3.5-5 6-6l4.5 4.5c-2 1.5-3.5 3.5-4.5 6z" fill="none" stroke="#d5d5d5" stroke-width="1"/>
<polygon points="514.50,43.80 517.50,43.80 517.50,47.80 520.50,47.80 520.50,50.80 517.50,50.80 517.50,54.80 514.50,54.80" fill="none" stroke="#1f78ad" stroke-width="1.1"/>
<polygon points="530.50,43.80 527.50,43.80 527.50,47.80 524.50,47.80 524.50,50.80 527.50,50.80 527.50,54.80 530.50,54.80" fill="none" stroke="#222" stroke-width="1.1"/>
<path d="M522.5 40v17.8" stroke="#222" stroke-width="1.1"/>
<polygon points="515.50,66.80 518.30,66.80 518.30,68.80 521.50,68.80 521.50,71.30 518.30,71.30 518.30,73.30 515.50,73.30" fill="none" stroke="#222" stroke-width="1.1"/>
<polygon points="524.50,66.80 527.30,66.80 527.30,68.80 530.50,68.80 530.50,71.30 527.30,71.30 527.30,73.30 524.50,73.30" fill="none" stroke="#222" stroke-width="1.1"/>
<polygon points="515.50,75.80 518.30,75.80 518.30,77.80 521.50,77.80 521.50,80.30 518.30,80.30 518.30,82.30 515.50,82.30" fill="none" stroke="#1f78ad" stroke-width="1.1"/>
<polygon points="524.50,75.80 527.30,75.80 527.30,77.80 530.50,77.80 530.50,80.30 527.30,80.30 527.30,82.30 524.50,82.30" fill="none" stroke="#222" stroke-width="1.1"/>
<path d="M515.5 99l5.5-5.5" stroke="#222" stroke-width="1.9"/><path d="M522.5 92l-6.2 0.9 5.3 5.3z" fill="#222"/><rect x="525" y="92.5" width="6.5" height="6.5" fill="none" stroke="#1f78ad" stroke-width="1.8"/>
<rect x="515" y="103" width="1.6" height="1.6" fill="#cfcfcf"/>
<rect x="515" y="106" width="1.6" height="1.6" fill="#cfcfcf"/>
<rect x="515" y="109" width="1.6" height="1.6" fill="#cfcfcf"/>
<rect x="518" y="103" width="1.6" height="1.6" fill="#cfcfcf"/>
<rect x="518" y="106" width="1.6" height="1.6" fill="#cfcfcf"/>
<rect x="518" y="109" width="1.6" height="1.6" fill="#cfcfcf"/>
<rect x="521" y="103" width="1.6" height="1.6" fill="#cfcfcf"/>
<rect x="521" y="106" width="1.6" height="1.6" fill="#cfcfcf"/>
<rect x="521" y="109" width="1.6" height="1.6" fill="#cfcfcf"/>
<path d="M781 42v14M776 56.5h8" stroke="#111" stroke-width="1.4"/><path d="M783.5 56c1.5-3 7.5-3 9 0c-1.5 3-7.5 3-9 0z" fill="#fff" stroke="#222" stroke-width="1"/><circle cx="788" cy="56" r="1.8" fill="#222"/>
<path d="M874 42.6h-13v12.5c0 2.6 2 4.5 5 4.5h12" fill="none" stroke="#222" stroke-width="1.7"/><g transform="rotate(-45 871 51.5)"><rect x="865" y="50.3" width="12" height="2.4" fill="#6ab4dc" stroke="#0d3a5a" stroke-width="0.9"/><path d="M866 48.2a3.4 3.4 0 1 0 0 6.6v-2h-2v-2.6h2z" fill="#6ab4dc" stroke="#0d3a5a" stroke-width="0.9"/><path d="M876 48.2a3.4 3.4 0 1 1 0 6.6v-2h2v-2.6h-2z" fill="#6ab4dc" stroke="#0d3a5a" stroke-width="0.9"/></g>
<path d="M933 60V43h17" fill="none" stroke="#1f78ad" stroke-width="1.6"/><path d="M933 55v5" stroke="#222" stroke-width="1.6"/><circle cx="942" cy="52.5" r="6" fill="none" stroke="#222" stroke-width="1.6"/><circle cx="942" cy="52.5" r="1.3" fill="#1f78ad"/>
<path d="M1002 43.5v11.5c0 2.5 1.5 4 4 4h12.5" fill="none" stroke="#1f78ad" stroke-width="1.7"/><path d="M1002 43.5h9" stroke="#1f78ad" stroke-width="1.7"/><path d="M1006 48h12M1006 53h12M1010 44v14M1014.5 44v14" stroke="#e0e0e0" stroke-width="0.8"/><path d="M1019 42l-6 1.5-2 4 3-0.5-4.5 6 8-5.5-3 0.5z" fill="#f5c518" stroke="#c4561a" stroke-width="0.8"/>
<path d="M1059 43.5v11.5c0 2.5 1.5 4 4 4h12.5" fill="none" stroke="#1f78ad" stroke-width="1.7"/><path d="M1059 43.5h9" stroke="#1f78ad" stroke-width="1.7"/><path d="M1062.5 47l12.5 4-2 5.5-12.5-4z" fill="#f2e25a" stroke="#333" stroke-width="0.9"/><path d="M1065 48l-0.6 2M1068 49l-0.6 2M1071 50l-0.6 2" stroke="#333" stroke-width="0.8"/><path d="M1068 54l6 4" stroke="#1f78ad" stroke-width="1.5"/>
<path d="M1131.5 42l-6.5 12h13z" fill="#4a9ccb" stroke="#1f6b99" stroke-width="1"/><circle cx="1126" cy="55.5" r="4.5" fill="#3b8dbd" stroke="#1f6b99" stroke-width="1"/>
<g transform="translate(14.4 167.4) scale(1.0)" stroke-linejoin="round"><path d="M0 5L3.1 4.2V1.6L7.8 0L12.2 1.6V6.6L15.9 7.8V14.7L10.9 17.2L0 9.4z" fill="#f4c81c" stroke="#4a3200" stroke-width="1"/><path d="M3.1 1.6L7.8 0L12.2 1.6L6.9 3.1z" fill="#f8e98a"/><path d="M6.9 3.1L12.2 1.6V6.6L6.9 7.5z" fill="#fde45a"/><path d="M6.9 7.5L12.2 6.6L15.9 7.8L10.9 9.7z" fill="#f8e98a"/><path d="M10.9 9.7L15.9 7.8V14.7L10.9 17.2z" fill="#fde45a"/><path d="M6.9 3.1V7.5L10.9 9.7V17.2" fill="none" stroke="#8a5a00" stroke-width="0.8"/><path d="M0 5L3.1 4.2V1.6L7.8 0L12.2 1.6V6.6L15.9 7.8V14.7L10.9 17.2L0 9.4z" fill="none" stroke="#4a3200" stroke-width="1"/></g>
<rect x="53.5" y="167.5" width="17" height="17" rx="1" fill="#fafafa" stroke="#1d4f73" stroke-width="1.2"/><rect x="54" y="168" width="16" height="2.5" fill="#4a9ccb"/><rect x="56" y="173" width="3" height="2" fill="#1f6b99"/><rect x="56" y="177" width="3" height="2" fill="#1f6b99"/><rect x="56" y="181" width="3" height="2" fill="#1f6b99"/><path d="M61 174h7M61 178h7M61 182h7" stroke="#333" stroke-width="0.9"/>
<path d="M96 167.5v17M96 173h5M96 182h5" fill="none" stroke="#333" stroke-width="1.2"/><rect x="100.5" y="169.5" width="6" height="6" fill="#fafafa" stroke="#333" stroke-width="1.1"/><rect x="102.5" y="178.5" width="6" height="6" fill="#fafafa" stroke="#333" stroke-width="1.1"/>
<circle cx="142" cy="176" r="5.5" fill="none" stroke="#222" stroke-width="1.8"/><path d="M133.5 176h17M142 167.5v17" stroke="#222" stroke-width="1.6"/>
<g><circle cx="181.5" cy="175.5" r="8.2" fill="#e8c21c"/><path d="M181.5 175.5L181.5 167.3A8.2 8.2 0 0 0 173.3 175.5z" fill="#3b7fd0"/><path d="M181.5 175.5L173.3 175.5A8.2 8.2 0 0 0 178 183z" fill="#2e9a3a"/><path d="M181.5 175.5L181.5 167.3A8.2 8.2 0 0 1 189.7 175.5z" fill="#d8332f"/><ellipse cx="186" cy="172" rx="2" ry="3.5" transform="rotate(-30 186 172)" fill="#222"/></g>
<rect x="213" y="167.5" width="14" height="4" fill="#4a9ccb"/>
<rect x="191" y="171" width="18" height="17" fill="#f0f0f0"/><rect x="209.5" y="171" width="17.5" height="17" fill="#f0f0f0"/><line x1="209" y1="171" x2="209" y2="188" stroke="#d8d8d8"/><path d="M202.5 175v6l-3-3z" fill="#111"/><path d="M218.5 175v6l3-3z" fill="#111"/>
<path d="M8.5 196.5h16l-6 7v8l-3 1.5v-9.5z" fill="#f0f0f0" stroke="#333" stroke-width="1"/><rect x="8.5" y="194.5" width="16" height="2.5" rx="1.2" fill="#4a9ccb" stroke="#1d4f73" stroke-width="0.8"/>
<g transform="translate(9 217.5) scale(0.82)" stroke-linejoin="round"><path d="M0 5L3.1 4.2V1.6L7.8 0L12.2 1.6V6.6L15.9 7.8V14.7L10.9 17.2L0 9.4z" fill="#f4c81c" stroke="#4a3200" stroke-width="1"/><path d="M3.1 1.6L7.8 0L12.2 1.6L6.9 3.1z" fill="#f8e98a"/><path d="M6.9 3.1L12.2 1.6V6.6L6.9 7.5z" fill="#fde45a"/><path d="M6.9 7.5L12.2 6.6L15.9 7.8L10.9 9.7z" fill="#f8e98a"/><path d="M10.9 9.7L15.9 7.8V14.7L10.9 17.2z" fill="#fde45a"/><path d="M6.9 3.1V7.5L10.9 9.7V17.2" fill="none" stroke="#8a5a00" stroke-width="0.8"/><path d="M0 5L3.1 4.2V1.6L7.8 0L12.2 1.6V6.6L15.9 7.8V14.7L10.9 17.2L0 9.4z" fill="none" stroke="#4a3200" stroke-width="1"/></g>
<rect x="4" y="222" width="7.5" height="13.5" rx="3.5" fill="#222"/><circle cx="7.7" cy="225.8" r="2" fill="#d83030"/><circle cx="7.7" cy="231.6" r="2" fill="#3aa048"/>
<path d="M27.6 255.6v-13.4c0-0.6 0.4-1 1-1h4.4l1.6 1.8h9.2c0.6 0 1 0.4 1 1v11.6c0 0.6-0.4 1-1 1h-15.2c-0.6 0-1-0.4-1-1z" fill="#f0f0f0" stroke="#2a2a2a" stroke-width="1.1"/><path d="M28.2 243.6h15.9" stroke="#bdbdbd" stroke-width="1.6"/><path d="M27.6 244.6h17.1" stroke="#2a2a2a" stroke-width="0.9"/>
<circle cx="38.8" cy="250" r="4.2" fill="#fafafa" stroke="#222" stroke-width="1.1"/><path d="M38.8 250l-2.6-1.6M38.8 250h2.6" fill="none" stroke="#222" stroke-width="0.8"/><path d="M31.5 252.5c0-3.5 2.3-5.5 5.5-5.6" fill="none" stroke="#2a7fb5" stroke-width="2"/><path d="M29.2 251.3h4.6l-2.3 3.4z" fill="#2a7fb5"/>
<path d="M27.6 277.6v-13.4c0-0.6 0.4-1 1-1h4.4l1.6 1.8h9.2c0.6 0 1 0.4 1 1v11.6c0 0.6-0.4 1-1 1h-15.2c-0.6 0-1-0.4-1-1z" fill="#f0f0f0" stroke="#2a2a2a" stroke-width="1.1"/><path d="M28.2 265.6h15.9" stroke="#bdbdbd" stroke-width="1.6"/><path d="M27.6 266.6h17.1" stroke="#2a2a2a" stroke-width="0.9"/>
<circle cx="36.5" cy="271.6" r="4.6" fill="#fafafa" stroke="#111" stroke-width="1.5"/><path d="M36.5 271.6l3-3" stroke="#2a7fb5" stroke-width="1.3"/><circle cx="38.8" cy="274" r="1.6" fill="#e82020"/><path d="M33.5 269.5l1.5 1.5M33 272.5h1.8" stroke="#555" stroke-width="0.8"/>
<path d="M27.6 299.6v-13.4c0-0.6 0.4-1 1-1h4.4l1.6 1.8h9.2c0.6 0 1 0.4 1 1v11.6c0 0.6-0.4 1-1 1h-15.2c-0.6 0-1-0.4-1-1z" fill="#f0f0f0" stroke="#2a2a2a" stroke-width="1.1"/><path d="M28.2 287.6h15.9" stroke="#bdbdbd" stroke-width="1.6"/><path d="M27.6 288.6h17.1" stroke="#2a2a2a" stroke-width="0.9"/>
<path d="M32.8 299.5l3.7-10h0.9l3.7 10M34.3 295.8h5.2M31.8 299.5h2.6M39.5 299.5h2.6" fill="none" stroke="#2a7fb5" stroke-width="1.5"/>
<circle cx="28.5" cy="306" r="1.8" fill="#fff" stroke="#555" stroke-width="0.8"/><circle cx="28.5" cy="312" r="1.8" fill="#6ab0e0" stroke="#3a70a0" stroke-width="0.8"/><circle cx="28.5" cy="318" r="1.8" fill="#f5c518" stroke="#a07000" stroke-width="0.8"/><path d="M32 306h11M32 312h11M32 318h7" stroke="#333" stroke-width="1.2"/><circle cx="41.5" cy="319" r="2.8" fill="#333"/><circle cx="41.5" cy="319" r="1" fill="#f7f7f7"/>
<path d="M30.5 331l12-3.5v14.5l-12 3.5z" fill="none" stroke="#333" stroke-width="1"/><path d="M36.5 328v18" stroke="#333" stroke-width="1" stroke-dasharray="2.5 1.5"/>
<path d="M30.5 353l12-3.5v14.5l-12 3.5z" fill="none" stroke="#333" stroke-width="1"/><path d="M36.5 350v18" stroke="#333" stroke-width="1" stroke-dasharray="2.5 1.5"/>
<path d="M30.5 375l12-3.5v14.5l-12 3.5z" fill="none" stroke="#333" stroke-width="1"/><path d="M36.5 372v18" stroke="#333" stroke-width="1" stroke-dasharray="2.5 1.5"/>
<path d="M29.5 395v13.5h14" fill="none" stroke="#222" stroke-width="1.8"/><path d="M29.5 392.5l-2.5 4h5z M45.5 408.5l-4-2.5v5z" fill="#222"/>
<path d="M28 416.5h6" stroke="#1f78ad" stroke-width="1.5"/><path d="M33 431.5h12" stroke="#1f78ad" stroke-width="1.5"/><path d="M34 420h10M34 426h10M38 416v15M42 416v15" stroke="#dddddd" stroke-width="0.8"/><rect x="27.5" y="419.5" width="6.5" height="13" rx="3" fill="#222"/><circle cx="30.7" cy="423.2" r="1.8" fill="#d83030"/><circle cx="30.7" cy="428.8" r="1.8" fill="#3aa048"/>
<defs><linearGradient id="gl" x1="0" y1="0" x2="1" y2="1"><stop offset="0" stop-color="#f4f6f8"/><stop offset="1" stop-color="#c9d2da"/></linearGradient><linearGradient id="gb" x1="0" y1="0" x2="1" y2="1"><stop offset="0" stop-color="#9fd0ea"/><stop offset="1" stop-color="#5a9cc0"/></linearGradient><linearGradient id="gs" x1="0" y1="0" x2="1" y2="0"><stop offset="0" stop-color="#cfcfcf"/><stop offset="0.5" stop-color="#fafafa"/><stop offset="1" stop-color="#bdbdbd"/></linearGradient><pattern id="hatch" width="3" height="3" patternUnits="userSpaceOnUse" patternTransform="rotate(45)"><rect width="3" height="3" fill="#2f6f95"/><rect width="1.2" height="3" fill="#9fd3ee"/></pattern></defs>
<path d="M740 160.5l5.5-5.5" stroke="#4f91ad" stroke-width="3.6" stroke-linecap="round"/><path d="M740 160.5l5.5-5.5" stroke="#74b8d6" stroke-width="1.8" stroke-linecap="round"/><circle cx="749.5" cy="151.3" r="6" fill="url(#gl)" stroke="#6b6b6b" stroke-width="1" stroke-dasharray="1.2 0.6"/><path d="M749.5 146.5l-1.5 1.8h3z M749.5 156.1l-1.5-1.8h3z M744.7 151.3l1.8-1.5v3z M754.3 151.3l-1.8-1.5v3z" fill="#333"/>
<path d="M769.5 145.5h12.5v11.5" fill="none" stroke="#333" stroke-width="1.1" stroke-dasharray="2.2 1.4"/><path d="M769.5 145.5v3" stroke="#333" stroke-width="1.1"/><path d="M765 162.5l4.5-4.5" stroke="#4f91ad" stroke-width="3.6" stroke-linecap="round"/><path d="M765 162.5l4.5-4.5" stroke="#74b8d6" stroke-width="1.8" stroke-linecap="round"/><circle cx="773.5" cy="153.3" r="5.6" fill="url(#gl)" stroke="#666" stroke-width="1"/>
<defs><linearGradient id="gs2" x1="0" y1="1" x2="1" y2="0"><stop offset="0" stop-color="#bdbdbd"/><stop offset="0.5" stop-color="#fbfbfb"/><stop offset="1" stop-color="#cfcfcf"/></linearGradient></defs>
<polygon points="797.25,162.13 807.09,149.52 803.91,146.48 791.75,156.87" fill="url(#gs2)" stroke="#6e6e6e" stroke-width="0.9" stroke-linejoin="round"/>
<line x1="801.68" y1="156.45" x2="797.22" y2="152.20" stroke="#8a8a8a" stroke-width="0.8"/>
<ellipse cx="794.5" cy="159.5" rx="1.8" ry="3.8" transform="rotate(-46.3 794.5 159.5)" fill="#e8e8e8" stroke="#6e6e6e" stroke-width="0.9"/>
<path d="M800 158.8h8" stroke="#3d8fbd" stroke-width="2.4"/><path d="M797.5 158.8l4.5-4v8z" fill="#3d8fbd"/>
<path d="M817 149.5c0-3 16-3 16 0v11c0 1.8-3 2.5-5 2.5v-10c0-1.5-6-1.5-6 0v10c-2 0-5-0.7-5-2.5z" fill="url(#gs)" stroke="#666" stroke-width="0.9"/><path d="M817.5 152v8.5c0 1.3 2.5 2.2 4.5 2.3v-10.3c-1.8 0-4-0.3-4.5-0.5z" fill="url(#hatch)"/><path d="M832.5 152v8.5c0 1.3-2.5 2.2-4.5 2.3v-10.3c1.8 0 4-0.3 4.5-0.5z" fill="url(#hatch)"/>
<polygon points="848.25,162.13 858.09,149.52 854.91,146.48 842.75,156.87" fill="url(#gs2)" stroke="#6e6e6e" stroke-width="0.9" stroke-linejoin="round"/>
<line x1="852.68" y1="156.45" x2="848.22" y2="152.20" stroke="#8a8a8a" stroke-width="0.8"/>
<ellipse cx="845.5" cy="159.5" rx="1.8" ry="3.8" transform="rotate(-46.3 845.5 159.5)" fill="#e8e8e8" stroke="#6e6e6e" stroke-width="0.9"/>
<path d="M853.5 145.2l-5.5 1-3.2 4.8 3.2-0.5-3.2 5.2 6.5-5.5-2.8 0.4z" fill="#f3d56a" stroke="#d0581e" stroke-width="0.8"/><path d="M851 162.8l3.2-8.5h1.4l3.2 8.5M852.3 159.6h4.6M850.3 162.8h2.4M857.3 162.8h2.4" fill="none" stroke="#3d8fbd" stroke-width="1.3"/>
<path d="M868.5 150.5l4.5-4.5h12.5v12.5l-4.5 4.5" fill="#f3f3f3" stroke="#333" stroke-width="1"/><path d="M881 150.5l4.5-4.5" stroke="#333" stroke-width="0.9"/><rect x="868.5" y="150.5" width="12.5" height="12" fill="url(#gb)" stroke="#1f4f6e" stroke-width="1"/><path d="M878 146.5v3M883 154.5h-2" stroke="#222" stroke-width="1"/>
<path d="M893.5 153.0h6l-3 3z" fill="#7c818c"/>
<path d="M909.5 147.5l6-3.5 10 2.5v13.5l-6 3.5-10-2.5z" fill="#f6f6f6" stroke="#555" stroke-width="0.9"/><path d="M909.5 147.5l10 2.5v13.5l-10-2.5z" fill="url(#gb)" stroke="#3a6e8c" stroke-width="0.9"/><path d="M919.5 150l6-3.5" stroke="#555" stroke-width="0.9"/><path d="M909.5 147.5l6-3.5 10 2.5-6 3.5z" fill="#e8f2f8" stroke="#555" stroke-width="0.8"/>
<path d="M933.5 153.0h6l-3 3z" fill="#7c818c"/>
<path d="M948.5 154.5c4-6 13.5-6 17.5 0c-4 6-13.5 6-17.5 0z" fill="#e6e6e6" stroke="#888" stroke-width="1"/><circle cx="957.3" cy="154.5" r="3.6" fill="#555"/><path d="M957.5 147v15.5" stroke="#111" stroke-width="1.1"/>
<path d="M973.5 153.0h6l-3 3z" fill="#7c818c"/>
<circle cx="996.5" cy="151.5" r="7" fill="#b3b6bd"/><circle cx="994.5" cy="149" r="3" fill="#c2c5cc"/><path d="M995.5 163.5l9-9.5 2.8 2.8-9.5 9-3.2 0.8z" fill="#c9ccd3" stroke="#a3a6ae" stroke-width="0.9"/>
<rect x="1013" y="151.5" width="19" height="12" fill="#222"/><path d="M1014.5 155h3v3h-3zM1020.5 155h3v3h-3zM1026.5 155h3v3h-3zM1017.5 159.5h3v3h-3zM1023.5 159.5h3v3h-3z" fill="#eee"/><circle cx="1022.3" cy="152.5" r="7.3" fill="#e8c21c"/><path d="M1022.3 152.5V145.2A7.3 7.3 0 0 0 1015 152.5z" fill="#3a7fd0"/><path d="M1022.3 152.5H1015A7.3 7.3 0 0 0 1019 159z" fill="#2e9a3a"/><path d="M1022.3 152.5V145.2A7.3 7.3 0 0 1 1029.6 152.5z" fill="#d8332f"/>
<path d="M1039.5 153.0h6l-3 3z" fill="#7c818c"/>
<rect x="1054.5" y="146.5" width="17.5" height="11.5" fill="#e4e4e4" stroke="#555" stroke-width="1"/><path d="M1063 158v2.5M1059.5 161h7.5" stroke="#444" stroke-width="1.3"/>
<rect x="1470.5" y="125.5" width="11" height="12" fill="none" stroke="#8a8d96" stroke-width="1"/><path d="M1473.5 131.5l2.5-2.5v5z" fill="#8a8d96"/><rect x="1496.5" y="125.5" width="11" height="12" fill="none" stroke="#8a8d96" stroke-width="1"/><path d="M1503.5 131.5l-2.5-2.5v5z" fill="#8a8d96"/><path d="M1522 137h10" stroke="#8a8d96" stroke-width="1.5"/><rect x="1547.5" y="131.5" width="9" height="6.5" fill="none" stroke="#8a8d96" stroke-width="1.1"/><path d="M1550.5 131.5v-3.5h9v6.5h-3" fill="none" stroke="#8a8d96" stroke-width="1.1"/><path d="M1575 127l10 10M1585 127l-10 10" stroke="#8a8d96" stroke-width="1.3"/>
<path d="M1518 174h-20v13c0 6.5 3 11 9.5 11h8.5" fill="none" stroke="#a8bfcd" stroke-width="1.6"/><path d="M1540.5 188.5c0 5.5-4 9-11 9.3" fill="none" stroke="#a9c0ce" stroke-width="4"/><path d="M1519.5 197.5l9-9v19z" fill="#aec4d1" stroke="#9db4c2" stroke-width="0.8"/>
<path d="M1545 206.5l18.5 18.5M1563.5 206.5l-18.5 18.5" stroke="#c8a5ae" stroke-width="4.5" stroke-linecap="round"/>
<line x1="1599.5" y1="117" x2="1599.5" y2="826" stroke="#2046b0" stroke-width="1"/>
<rect x="1574.5" y="168.5" width="25" height="167" fill="#f0f0f0" stroke="#8e8e8e" stroke-width="1"/><rect x="1575" y="169" width="24.5" height="21.5" fill="#ffffff"/>
<line x1="1575" y1="190.8" x2="1599" y2="190.8" stroke="#9a9a9a"/>
<line x1="1575" y1="214.6" x2="1599" y2="214.6" stroke="#9a9a9a"/>
<line x1="1575" y1="238.8" x2="1599" y2="238.8" stroke="#9a9a9a"/>
<line x1="1575" y1="262.8" x2="1599" y2="262.8" stroke="#9a9a9a"/>
<line x1="1575" y1="287.2" x2="1599" y2="287.2" stroke="#9a9a9a"/>
<line x1="1575" y1="311.3" x2="1599" y2="311.3" stroke="#9a9a9a"/>
<line x1="1599.5" y1="168" x2="1599.5" y2="336" stroke="#2046b0" stroke-width="1"/>
<defs><radialGradient id="gball" cx="0.4" cy="0.3" r="0.8"><stop offset="0" stop-color="#5aa2d6"/><stop offset="0.6" stop-color="#1c5a8a"/><stop offset="1" stop-color="#0b2f52"/></radialGradient></defs><circle cx="1587" cy="179.7" r="9.5" fill="url(#gball)"/><circle cx="1587" cy="179.7" r="5.5" fill="none" stroke="#8fc0e6" stroke-width="0.7"/><path d="M1585.5 176.7v6l4-3z" fill="#d5e8f5"/>
<rect x="1580.5" y="203.5" width="12.5" height="9" fill="#fafafa" stroke="#222" stroke-width="1"/><rect x="1584.5" y="206" width="4.5" height="6.5" fill="none" stroke="#222" stroke-width="0.9"/><path d="M1578.5 204L1587 196l8.5 8" fill="none" stroke="#1d5a84" stroke-width="2.4"/><path d="M1579.5 203.4L1587 196.6l7.5 6.8" fill="none" stroke="#4f9ac8" stroke-width="0.7"/>
<path d="M1580.5 221.5l2.2-2.6h2.6l-2.2 2.6z" fill="#fafafa" stroke="#222" stroke-width="0.9" stroke-linejoin="round"/><path d="M1580.5 221.5h2.6v13.5h-2.6z" fill="#f2f2f2" stroke="#222" stroke-width="0.9"/><path d="M1583.1 221.5l2.2-2.6v13.5l-2.2 2.6z" fill="#d8d8d8" stroke="#222" stroke-width="0.9" stroke-linejoin="round"/>
<path d="M1584.5 221.5l2.2-2.6h2.6l-2.2 2.6z" fill="#fafafa" stroke="#222" stroke-width="0.9" stroke-linejoin="round"/><path d="M1584.5 221.5h2.6v13.5h-2.6z" fill="#f2f2f2" stroke="#222" stroke-width="0.9"/><path d="M1587.1 221.5l2.2-2.6v13.5l-2.2 2.6z" fill="#d8d8d8" stroke="#222" stroke-width="0.9" stroke-linejoin="round"/>
<path d="M1588.5 221.5l2.2-2.6h2.6l-2.2 2.6z" fill="#fafafa" stroke="#222" stroke-width="0.9" stroke-linejoin="round"/><path d="M1588.5 221.5h2.6v13.5h-2.6z" fill="#f2f2f2" stroke="#222" stroke-width="0.9"/><path d="M1591.1 221.5l2.2-2.6v13.5l-2.2 2.6z" fill="#d8d8d8" stroke="#222" stroke-width="0.9" stroke-linejoin="round"/>
<path d="M1578 260v-15c0-0.6 0.4-1 1-1h5l2 2h8c0.5 0 1 0.4 1 1v2" fill="#e2e2e2" stroke="#333" stroke-width="1"/><path d="M1578 260.5l4-11h15l-4 11z" fill="#f6f6f6" stroke="#333" stroke-width="1"/>
<rect x="1578.5" y="268.5" width="17" height="16" rx="1.5" fill="#fafafa" stroke="#222" stroke-width="1.1"/><rect x="1580.5" y="271" width="8" height="3" fill="#f5c518" stroke="#7a5a08" stroke-width="0.6"/><rect x="1590.5" y="271" width="3" height="3" fill="#f5c518" stroke="#7a5a08" stroke-width="0.6"/><path d="M1583 276.5h3v3h3.5v2.5h-9.5v-2.5h3z" fill="#f5c518" stroke="#7a5a08" stroke-width="0.6"/><rect x="1590.5" y="276" width="3" height="7" fill="#ddd" stroke="#555" stroke-width="0.6"/>
<circle cx="1586.5" cy="299" r="8" fill="#e8c21c"/><path d="M1586.5 299V291A8 8 0 0 0 1578.5 299z" fill="#3a7fd0"/><path d="M1586.5 299H1578.5A8 8 0 0 0 1582.5 306z" fill="#2e9a3a"/><path d="M1586.5 299V291A8 8 0 0 1 1594.5 299z" fill="#d8332f"/>
<rect x="1578.5" y="315.5" width="17.5" height="17.5" rx="1" fill="#fafafa" stroke="#1d3f5a" stroke-width="1.1"/><rect x="1579" y="316" width="16.5" height="2.8" fill="#3d8fc0"/><rect x="1580.5" y="321.5" width="3.5" height="2.2" fill="#1f6b99"/><rect x="1580.5" y="325.5" width="3.5" height="2.2" fill="#1f6b99"/><rect x="1580.5" y="329.5" width="3.5" height="2.2" fill="#1f6b99"/><path d="M1586 322.6h8M1586 326.6h8M1586 330.6h8" stroke="#333" stroke-width="0.9"/>
<rect x="268" y="746" width="3.8" height="18" fill="#74ad74" stroke="#1f6a1f" stroke-width="0.9"/><path d="M270 738.3l-4 8h8z" fill="#2a7a2a" stroke="#1a4a1a" stroke-width="0.8"/><rect x="273" y="766" width="18.5" height="3.8" fill="#e8706a" stroke="#a81c1c" stroke-width="0.9"/><path d="M300 768l-9-4.2v8.4z" fill="#c42020" stroke="#701010" stroke-width="0.8"/><circle cx="270" cy="768" r="4.3" fill="#1b1b80"/><path d="M266.5 765.5v5" stroke="#2030ff" stroke-width="1.5"/><path d="M266.2 727.2l3.3 4 3.3-4M269.5 731.2v4.5" fill="none" stroke="#1a8a1a" stroke-width="0.9"/><path d="M301.2 763.5l4.6 8.5M305.8 763.5l-4.6 8.5" fill="none" stroke="#ff2020" stroke-width="0.9"/>
</svg>
</body></html>
